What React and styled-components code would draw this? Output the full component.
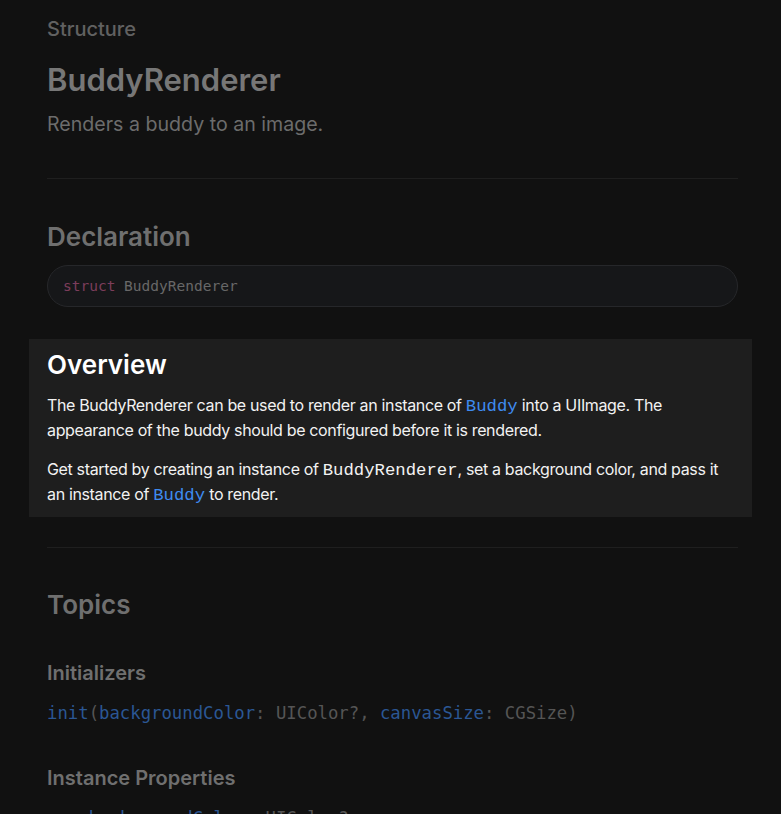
import React from "react";
import styled, { createGlobalStyle } from "styled-components";

const Global = createGlobalStyle`
  html, body { margin: 0; padding: 0; background: #111111; overflow: hidden; }
  body { font-family: Inter, "Noto Sans", sans-serif; -webkit-font-smoothing: antialiased; }
`;

const Page = styled.main`
  width: 691px;
  padding: 14px 0 0 47px;
`;

const Eyebrow = styled.div`
  font-size: 20px;
  font-weight: 500;
  color: #616161;
  line-height: 30px;
`;

const Title = styled.h1`
  margin: 17px 0 0;
  font-size: 31px;
  font-weight: 600;
  color: #777777;
  line-height: 38px;
`;

const Abstract = styled.p`
  margin: 10px 0 0;
  font-size: 19.6px;
  color: #6c6c6c;
  line-height: 30px;
`;

const Divider = styled.hr`
  border: 0;
  border-top: 1px solid #1f1f1f;
  margin: ${(p) => p.$top}px 0 0;
`;

const SectionTitle = styled.h2`
  margin: ${(p) => p.$top || 0}px 0 0;
  font-size: 26px;
  font-weight: 600;
  line-height: 34px;
  color: ${(p) => (p.$bright ? "#ffffff" : "#6f6f6f")};
`;

const CodeBox = styled.div`
  margin-top: 11px;
  height: 40px;
  border: 1px solid #26272a;
  border-radius: 21px;
  background: #161719;
  display: flex;
  align-items: center;
  padding: 0 15px;
  font-family: "DejaVu Sans Mono", monospace;
  font-size: 14.5px;
  color: #686868;
`;

const Keyword = styled.span`
  color: #7c3d5b;
`;

const Highlight = styled.section`
  margin: 32px -14px 0 -18px;
  padding: 9px 14px 10px 18px;
  background: #1e1e1e;
`;

const Para = styled.p`
  margin: ${(p) => p.$top}px 0 0;
  font-size: 16px;
  letter-spacing: -0.35px;
  line-height: 25px;
  color: #f2f2f2;
`;

const Code = styled.code`
  font-family: "Liberation Mono", monospace;
  font-size: 17.3px;
  line-height: 1;
  letter-spacing: 0;
  color: ${(p) => (p.$link ? "#3e8bf0" : "#f2f2f2")};
`;

const SubTitle = styled.h3`
  margin: ${(p) => p.$top}px 0 0;
  font-size: 20px;
  font-weight: 600;
  line-height: 28px;
  color: #6f6f6f;
`;

const Symbol = styled.div`
  margin-top: ${(p) => p.$top}px;
  font-family: "DejaVu Sans Mono", monospace;
  font-size: 17.3px;
  line-height: 26px;
  color: #555555;
  white-space: nowrap;
`;

const Ident = styled.span`
  color: #2b5794;
`;

export default function App() {
  return (
    <>
      <Global />
      <Page>
        <Eyebrow>Structure</Eyebrow>
        <Title>BuddyRenderer</Title>
        <Abstract>Renders a buddy to an image.</Abstract>
        <Divider $top={39} />
        <SectionTitle $top={41}>Declaration</SectionTitle>
        <CodeBox>
          <Keyword>struct</Keyword>&nbsp;BuddyRenderer
        </CodeBox>
        <Highlight>
          <SectionTitle $bright>Overview</SectionTitle>
          <Para $top={11}>
            The BuddyRenderer can be used to render an instance of <Code $link>Buddy</Code> into a
            UIImage. The appearance of the buddy should be configured before it is rendered.
          </Para>
          <Para $top={14}>
            Get started by creating an instance of <Code>BuddyRenderer</Code>, set a background
            color, and pass it an instance of <Code $link>Buddy</Code> to render.
          </Para>
        </Highlight>
        <Divider $top={30} />
        <SectionTitle $top={40}>Topics</SectionTitle>
        <SubTitle $top={37}>Initializers</SubTitle>
        <Symbol $top={13}>
          <Ident>init</Ident>(<Ident>backgroundColor</Ident>: UIColor?, <Ident>canvasSize</Ident>: CGSize)
        </Symbol>
        <SubTitle $top={38}>Instance Properties</SubTitle>
        <Symbol $top={13}>
          <Ident>var</Ident> <Ident>backgroundColor</Ident>: UIColor?
        </Symbol>
      </Page>
    </>
  );
}
